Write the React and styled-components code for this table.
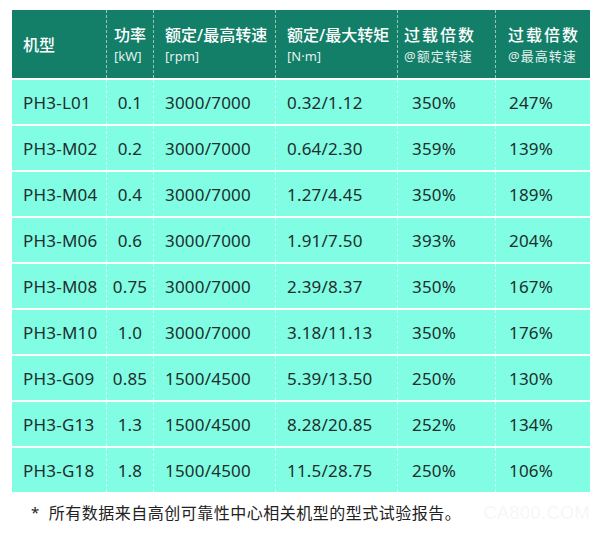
import React from 'react';
import styled, { createGlobalStyle } from 'styled-components';

const GlobalStyle = createGlobalStyle`
  html, body {
    margin: 0;
    padding: 0;
    background: #ffffff;
  }
  body {
    font-family: 'Noto Sans', 'Noto Sans CJK SC', sans-serif;
  }
`;

const Page = styled.div`
  width: 600px;
  height: 534px;
  padding: 10px 10px 0 12px;
  box-sizing: border-box;
  position: relative;
`;

const COLS = '94px 47px 122px 122px 98px 96px';

const HeaderRow = styled.div`
  display: grid;
  grid-template-columns: ${COLS};
  height: 68px;
  background: #147f69;
  color: #ffffff;
`;

const HeadCell = styled.div`
  display: flex;
  flex-direction: column;
  justify-content: center;
  padding-left: ${(p) => p.$pad || 11}px;
  padding-top: 2px;
  box-sizing: border-box;
  border-left: ${(p) => (p.$first ? 'none' : '1px dashed rgba(255, 255, 255, 0.55)')};
`;

const HeadTitle = styled.div`
  font-size: 16px;
  line-height: 22px;
  letter-spacing: ${(p) => p.$spacing || 0}px;
  font-weight: 500;
`;

const HeadUnit = styled.div`
  font-size: 13px;
  line-height: 20px;
  letter-spacing: ${(p) => p.$spacing || 0}px;
  color: rgba(255, 255, 255, 0.9);
`;

const Row = styled.div`
  display: grid;
  grid-template-columns: ${COLS};
  height: 44px;
  margin-top: 2px;
  background: #80fde3;
  color: #1f2e2d;
`;

const Cell = styled.div`
  display: flex;
  align-items: center;
  justify-content: ${(p) => (p.$center ? 'center' : 'flex-start')};
  padding-left: ${(p) => (p.$center ? 0 : p.$pad || 11)}px;
  font-size: 17px;
  letter-spacing: 0.2px;
  box-sizing: border-box;
  border-left: ${(p) => (p.$first ? 'none' : '1px dashed rgba(255, 255, 255, 0.55)')};
`;

const Note = styled.div`
  display: flex;
  align-items: center;
  gap: 9px;
  margin-top: 8px;
  padding-left: 19px;
  font-size: 16px;
  letter-spacing: 0.5px;
  color: #222222;
`;

const Star = styled.span`
  font-size: 15px;
`;

const Watermark = styled.div`
  position: absolute;
  right: 10px;
  bottom: 10px;
  font-family: 'Liberation Sans', sans-serif;
  font-size: 18px;
  letter-spacing: 0.5px;
  color: rgba(215, 215, 215, 0.22);
`;

const rows = [
  ['PH3-L01', '0.1', '3000/7000', '0.32/1.12', '350%', '247%'],
  ['PH3-M02', '0.2', '3000/7000', '0.64/2.30', '359%', '139%'],
  ['PH3-M04', '0.4', '3000/7000', '1.27/4.45', '350%', '189%'],
  ['PH3-M06', '0.6', '3000/7000', '1.91/7.50', '393%', '204%'],
  ['PH3-M08', '0.75', '3000/7000', '2.39/8.37', '350%', '167%'],
  ['PH3-M10', '1.0', '3000/7000', '3.18/11.13', '350%', '176%'],
  ['PH3-G09', '0.85', '1500/4500', '5.39/13.50', '250%', '130%'],
  ['PH3-G13', '1.3', '1500/4500', '8.28/20.85', '252%', '134%'],
  ['PH3-G18', '1.8', '1500/4500', '11.5/28.75', '250%', '106%'],
];

const pads = [11, 0, 11, 11, 14, 13];

const App = () => (
  <>
    <GlobalStyle />
    <Page>
      <HeaderRow>
        <HeadCell $first>
          <HeadTitle>机型</HeadTitle>
        </HeadCell>
        <HeadCell $pad={7}>
          <HeadTitle>功率</HeadTitle>
          <HeadUnit>[kW]</HeadUnit>
        </HeadCell>
        <HeadCell>
          <HeadTitle>额定/最高转速</HeadTitle>
          <HeadUnit>[rpm]</HeadUnit>
        </HeadCell>
        <HeadCell>
          <HeadTitle>额定/最大转矩</HeadTitle>
          <HeadUnit>[N·m]</HeadUnit>
        </HeadCell>
        <HeadCell $pad={6}>
          <HeadTitle $spacing={2}>过载倍数</HeadTitle>
          <HeadUnit $spacing={1}>@额定转速</HeadUnit>
        </HeadCell>
        <HeadCell $pad={12}>
          <HeadTitle $spacing={2}>过载倍数</HeadTitle>
          <HeadUnit $spacing={1}>@最高转速</HeadUnit>
        </HeadCell>
      </HeaderRow>

      {rows.map((row) => (
        <Row key={row[0]}>
          {row.map((value, i) => (
            <Cell key={i} $first={i === 0} $center={i === 1} $pad={pads[i]}>
              {value}
            </Cell>
          ))}
        </Row>
      ))}

      <Note>
        <Star>*</Star>
        <span>所有数据来自高创可靠性中心相关机型的型式试验报告。</span>
      </Note>
      <Watermark>CA800.COM</Watermark>
    </Page>
  </>
);

export default App;
